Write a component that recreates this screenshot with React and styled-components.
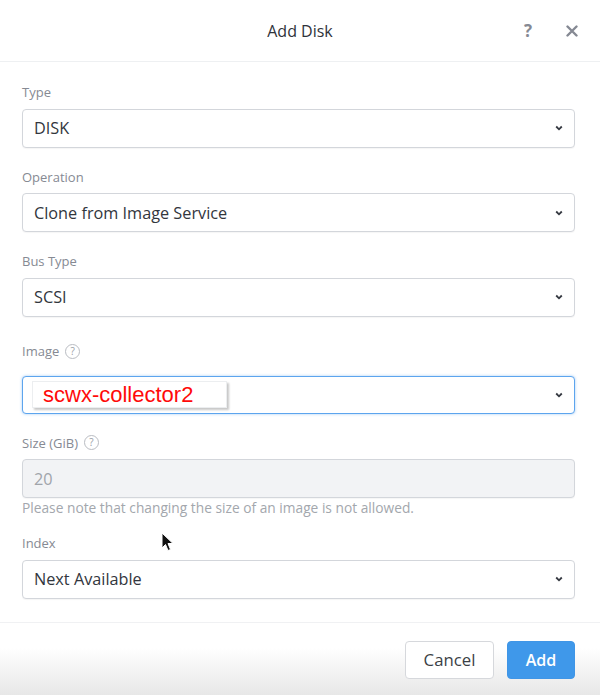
import React from "react";
import styled, { createGlobalStyle } from "styled-components";

const Global = createGlobalStyle`
  html, body { margin: 0; padding: 0; background: #fff; }
  body { font-family: "Open Sans", "Liberation Sans", sans-serif; color: #32363d; }
  * { box-sizing: border-box; }
`;

const Dialog = styled.div`
  width: 600px;
  height: 695px;
  display: flex;
  flex-direction: column;
  position: relative;
  background: #fff;
  overflow: hidden;
`;

const Header = styled.div`
  height: 62px;
  display: grid;
  grid-template-columns: 1fr auto 1fr;
  align-items: center;
  border-bottom: 1px solid #eef0f2;
  padding: 0 22px;
`;

const Title = styled.div`
  grid-column: 2;
  font-size: 16px;
  color: #2f333a;
`;

const HeaderActions = styled.div`
  grid-column: 3;
  justify-self: end;
  display: flex;
  align-items: center;
  gap: 34px;
`;

const IconButton = styled.span`
  font-size: 17px;
  font-weight: 700;
  color: #858993;
  line-height: 1;
  display: flex;
  align-items: center;
`;

const Body = styled.div`
  padding: 22px 25px 23px 22px;
  display: flex;
  flex-direction: column;
  border-bottom: 1px solid #f0f1f3;
`;

const Field = styled.div`
  display: flex;
  flex-direction: column;
  margin-bottom: ${(p) => p.$mb ?? 21}px;
`;

const Label = styled.div`
  height: 16px;
  font-size: 13px;
  line-height: 16px;
  color: #868a93;
  display: flex;
  align-items: center;
  gap: 6px;
  margin-top: ${(p) => p.$mt ?? 0}px;
  margin-bottom: ${(p) => p.$mb ?? 8.5}px;
`;

const Help = styled.span`
  width: 15px;
  height: 15px;
  border: 1px solid #b9bcc2;
  border-radius: 50%;
  font-size: 10px;
  line-height: 13px;
  text-align: center;
  color: #9a9ea5;
`;

const SelectBox = styled.div`
  height: ${(p) => p.$h ?? 39}px;
  border: 1px solid ${(p) => (p.$focus ? "#5da5ee" : "#d3d6db")};
  box-shadow: ${(p) => (p.$focus ? "0 0 3px rgba(90,160,235,0.55)" : "0 1px 1px rgba(0,0,0,0.04)")};
  border-radius: 4px;
  background: ${(p) => (p.$disabled ? "#f2f3f5" : "#fff")};
  display: flex;
  align-items: center;
  padding: 0 11px 0 ${(p) => p.$pl ?? 11}px;
  font-size: 16.25px;
  color: ${(p) => (p.$disabled ? "#a0a4aa" : "#32363d")};
`;

const Value = styled.span`
  flex: 1;
`;

const Chevron = () => (
  <svg width="8" height="6" viewBox="0 0 8 6">
    <path d="M1.2 1.5 L4 4.3 L6.8 1.5" fill="none" stroke="#353941" strokeWidth="1.8" />
  </svg>
);

const PastedTag = styled.span`
  height: 27px;
  width: 195px;
  background: #fff;
  box-shadow: 2px 2px 2px rgba(0, 0, 0, 0.22);
  border: 1px solid #eceef0;
  font-family: "Liberation Sans", Arial, sans-serif;
  font-size: 22px;
  color: #ff0a0a;
  display: flex;
  align-items: center;
  padding-left: 10px;
`;

const Note = styled.div`
  font-size: 13.75px;
  color: #a3a7ad;
  line-height: 16px;
  margin-top: 2px;
  margin-bottom: 19px;
`;

const Footer = styled.div`
  flex: 1;
  display: flex;
  justify-content: flex-end;
  align-items: flex-start;
  gap: 13px;
  padding: 18px 25px 0 0;
  background: linear-gradient(to bottom, #ffffff 35%, #e7e7e7 100%);
`;

const Button = styled.button`
  height: 38px;
  width: ${(p) => p.$w}px;
  border-radius: 4px;
  font-family: "Open Sans", "Liberation Sans", sans-serif;
  font-size: ${(p) => (p.$primary ? 16 : 16.75)}px;
  cursor: pointer;
  border: 1px solid ${(p) => (p.$primary ? "#3f95e6" : "#d6d8dc")};
  background: ${(p) => (p.$primary ? "#3f98ea" : "#fff")};
  color: ${(p) => (p.$primary ? "#fff" : "#3b3f46")};
  font-weight: ${(p) => (p.$primary ? 600 : 400)};
`;

const Cursor = styled.svg`
  position: absolute;
  left: 161px;
  top: 532px;
`;

function Select({ value, children, ...rest }) {
  return (
    <SelectBox {...rest}>
      <Value>{children ?? value}</Value>
      <Chevron />
    </SelectBox>
  );
}

export default function App() {
  return (
    <>
      <Global />
      <Dialog>
        <Header>
          <Title>Add Disk</Title>
          <HeaderActions>
            <IconButton>?</IconButton>
            <IconButton>
              <svg width="12" height="12" viewBox="0 0 12 12">
                <path d="M1.5 1.5 L10.5 10.5 M10.5 1.5 L1.5 10.5" stroke="#858993" strokeWidth="2.4" strokeLinecap="round" />
              </svg>
            </IconButton>
          </HeaderActions>
        </Header>
        <Body>
          <Field>
            <Label>Type</Label>
            <Select value="DISK" />
          </Field>
          <Field>
            <Label>Operation</Label>
            <Select value="Clone from Image Service" />
          </Field>
          <Field>
            <Label>Bus Type</Label>
            <Select value="SCSI" />
          </Field>
          <Field>
            <Label $mt={5.5} $mb={16.5}>
              Image <Help>?</Help>
            </Label>
            <Select $focus $h={38} $pl={9}>
              <PastedTag>scwx-collector2</PastedTag>
            </Select>
          </Field>
          <Field $mb={0}>
            <Label>
              Size (GiB) <Help>?</Help>
            </Label>
            <SelectBox $disabled>20</SelectBox>
          </Field>
          <Note>Please note that changing the size of an image is not allowed.</Note>
          <Field $mb={0}>
            <Label>Index</Label>
            <Select value="Next Available" />
          </Field>
        </Body>
        <Footer>
          <Button $w={89}>Cancel</Button>
          <Button $w={68} $primary>
            Add
          </Button>
        </Footer>
        <Cursor width="16" height="22" viewBox="0 0 16 22">
          <path d="M1 1 L1 16 L4.5 12.5 L7 18.5 L9.5 17.5 L7 11.5 L12 11.5 Z" fill="#111" stroke="#fff" strokeWidth="1" />
        </Cursor>
      </Dialog>
    </>
  );
}
